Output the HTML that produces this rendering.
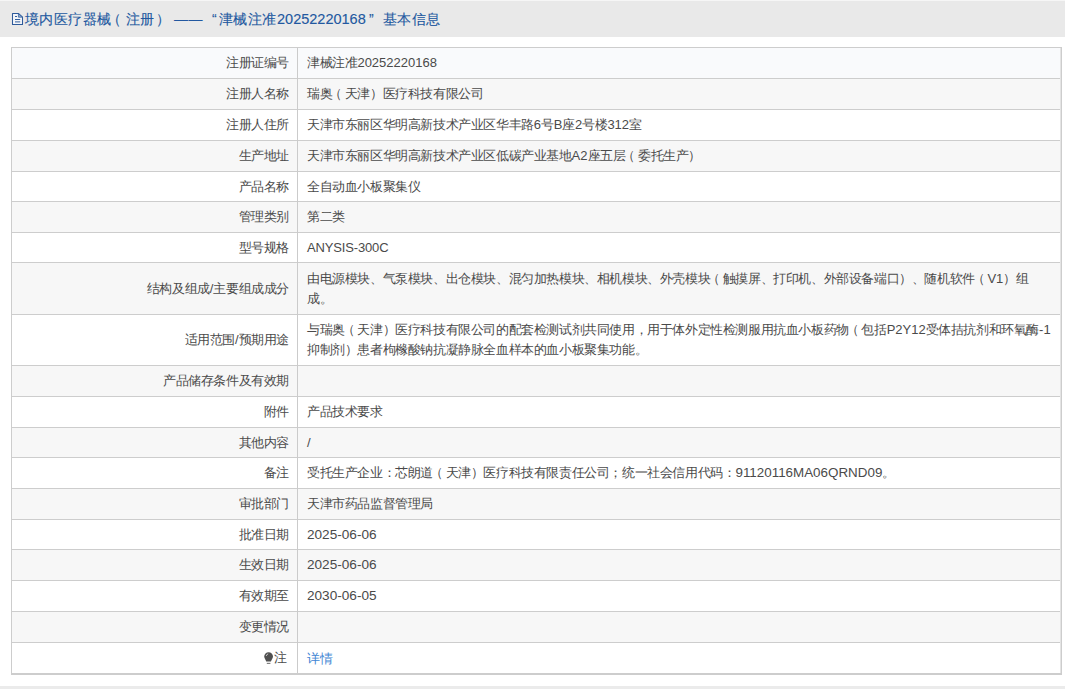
<!DOCTYPE html><html><head><meta charset="utf-8"><style>

html,body{margin:0;padding:0;background:#fff;width:1065px;height:689px;overflow:hidden;position:relative;font-family:"Liberation Sans",sans-serif;}
#hdr{position:absolute;left:0;top:0;width:1065px;height:37px;background:#e9e9e9;border-top:1px solid #f6f6f6;box-sizing:border-box;}
#icon{position:absolute;left:11px;top:12px;}
.t{position:absolute;top:9px;font-size:14px;line-height:20px;color:#2258a0;letter-spacing:0.4px;-webkit-text-stroke:0.12px #2258a0;white-space:nowrap;}
.t.n{font-size:14.5px;letter-spacing:0;}
#foot{position:absolute;left:0;top:686px;width:1065px;height:3px;background:#ebebeb;}
#tbl{position:absolute;left:11px;top:47px;width:1051px;height:628px;box-sizing:border-box;border-style:solid;border-color:#cdcdcd;border-width:1px 1px 2px 1px;box-shadow:inset -1px 0 0 #e4e4e4;}
.r{position:absolute;left:12px;width:1048px;box-sizing:border-box;}
.d{position:absolute;left:12px;width:1048px;height:1px;background:#cdcdcd;}
.g{background:#f7f7f7;}
.h{background:#f9fafc;}
.l{position:absolute;right:771px;top:0;bottom:0;display:flex;align-items:center;justify-content:flex-end;font-size:13px;line-height:20px;color:#4a4a4a;letter-spacing:-0.4px;white-space:nowrap;}
.v{position:absolute;left:295px;top:0;bottom:0;display:flex;align-items:center;font-size:13px;line-height:20px;color:#4a4a4a;letter-spacing:-0.4px;white-space:nowrap;}
.n{letter-spacing:0;}
.lp{position:relative;left:-3px;}
#col{position:absolute;left:297px;top:48px;width:1px;height:625px;background:#cbcbcb;}
.lk{color:#3f86d4;position:relative;top:1px;}
#bulb{position:absolute;left:263px;top:651px;}

</style></head><body>
<div id="hdr"></div>
<svg id="icon" width="13" height="14" viewBox="0 0 13 14"><path d="M1.5 1.5H7.4L11.5 5.2V12.5H1.5Z" fill="#f3f5f9" stroke="#2f5b9b" stroke-width="1.05" stroke-linejoin="round"/><path d="M7.4 1.5L11.5 5.2H7.4Z" fill="#8aa6d0" stroke="#2f5b9b" stroke-width="0.7" stroke-linejoin="round"/><path d="M4 4.5H6M4 7.5H9.2M4 9.9H9.2" stroke="#33609e" stroke-width="1"/></svg>
<span class="t" style="left:25px">境内医疗器械</span>
<span class="t" style="left:107px">（</span>
<span class="t" style="left:126px">注册</span>
<span class="t" style="left:156px">）</span>
<span class="t" style="left:174px">——</span>
<span class="t" style="left:212px">“</span>
<span class="t" style="left:219px">津械注准</span>
<span class="t n" style="left:277px">20252220168</span>
<span class="t" style="left:369px">”</span>
<span class="t" style="left:383px">基本信息</span>
<div id="tbl"></div>
<div class="r h" style="top:48px;height:30px"><div class="l"><div>注册证编号</div></div><div class="v"><div>津械注准<span class="n">20252220168</span></div></div></div>
<div class="r g" style="top:79px;height:30px"><div class="l"><div>注册人名称</div></div><div class="v"><div>瑞奥<span class="lp">（</span>天津）医疗科技有限公司</div></div></div>
<div class="d" style="top:78px"></div>
<div class="r" style="top:110px;height:30px"><div class="l"><div>注册人住所</div></div><div class="v"><div>天津市东丽区华明高新技术产业区华丰路<span class="n">6</span>号<span class="n">B</span>座<span class="n">2</span>号楼<span class="n">312</span>室</div></div></div>
<div class="d" style="top:109px"></div>
<div class="r g" style="top:141px;height:30px"><div class="l"><div>生产地址</div></div><div class="v"><div>天津市东丽区华明高新技术产业区低碳产业基地<span class="n">A2</span>座五层<span class="lp">（</span>委托生产）</div></div></div>
<div class="d" style="top:140px"></div>
<div class="r" style="top:172px;height:29px"><div class="l"><div>产品名称</div></div><div class="v"><div>全自动血小板聚集仪</div></div></div>
<div class="d" style="top:171px"></div>
<div class="r g" style="top:202px;height:30px"><div class="l"><div>管理类别</div></div><div class="v"><div>第二类</div></div></div>
<div class="d" style="top:201px"></div>
<div class="r" style="top:233px;height:29px"><div class="l"><div>型号规格</div></div><div class="v"><div><span class="n" style="letter-spacing:-0.15px">ANYSIS-300C</span></div></div></div>
<div class="d" style="top:232px"></div>
<div class="r g" style="top:263px;height:51px"><div class="l"><div>结构及组成<span class="n">/</span>主要组成成分</div></div><div class="v"><div>由电源模块、气泵模块、出仓模块、混匀加热模块、相机模块、外壳模块<span class="lp">（</span>触摸屏、打印机、外部设备端口）、随机软件<span class="lp">（</span><span class="n">V1</span>）组<br>成。</div></div></div>
<div class="d" style="top:262px"></div>
<div class="r" style="top:315px;height:50px"><div class="l"><div>适用范围<span class="n">/</span>预期用途</div></div><div class="v"><div>与瑞奥<span class="lp">（</span>天津）医疗科技有限公司的配套检测试剂共同使用，用于体外定性检测服用抗血小板药物<span class="lp">（</span>包括<span class="n">P2Y12</span>受体拮抗剂和环氧酶<span class="n">-1</span><br>抑制剂）患者枸橼酸钠抗凝静脉全血样本的血小板聚集功能。</div></div></div>
<div class="d" style="top:314px"></div>
<div class="r g" style="top:366px;height:30px"><div class="l"><div>产品储存条件及有效期</div></div><div class="v"><div></div></div></div>
<div class="d" style="top:365px"></div>
<div class="r" style="top:397px;height:30px"><div class="l"><div>附件</div></div><div class="v"><div>产品技术要求</div></div></div>
<div class="d" style="top:396px"></div>
<div class="r g" style="top:428px;height:29px"><div class="l"><div>其他内容</div></div><div class="v"><div><span class="n">/</span></div></div></div>
<div class="d" style="top:427px"></div>
<div class="r" style="top:458px;height:30px"><div class="l"><div>备注</div></div><div class="v"><div>受托生产企业：芯朗道<span class="lp">（</span>天津）医疗科技有限责任公司；统一社会信用代码：<span class="n" style="font-size:13.4px">91120116MA06QRND09</span>。</div></div></div>
<div class="d" style="top:457px"></div>
<div class="r g" style="top:489px;height:30px"><div class="l"><div>审批部门</div></div><div class="v"><div>天津市药品监督管理局</div></div></div>
<div class="d" style="top:488px"></div>
<div class="r" style="top:520px;height:29px"><div class="l"><div>批准日期</div></div><div class="v"><div><span class="n" style="font-size:13.6px">2025-06-06</span></div></div></div>
<div class="d" style="top:519px"></div>
<div class="r g" style="top:550px;height:30px"><div class="l"><div>生效日期</div></div><div class="v"><div><span class="n" style="font-size:13.6px">2025-06-06</span></div></div></div>
<div class="d" style="top:549px"></div>
<div class="r" style="top:581px;height:30px"><div class="l"><div>有效期至</div></div><div class="v"><div><span class="n" style="font-size:13.6px">2030-06-05</span></div></div></div>
<div class="d" style="top:580px"></div>
<div class="r g" style="top:612px;height:30px"><div class="l"><div>变更情况</div></div><div class="v"><div></div></div></div>
<div class="d" style="top:611px"></div>
<div class="r" style="top:643px;height:30px"><div class="l"><div><span style="position:relative;left:-2px">注</span></div></div><div class="v"><div><span class="lk">详情</span></div></div></div>
<div class="d" style="top:642px"></div>
<div id="col"></div>
<svg id="bulb" width="12" height="14" viewBox="0 0 12 14"><path d="M1.2 5.6A4.4 4.4 0 1 1 10 5.6C10 7.6 8.4 8.6 8 10.6H3.2C2.8 8.6 1.2 7.6 1.2 5.6Z" fill="#505050"/><path d="M3.2 5A2.6 2.6 0 0 1 5.2 2.9" stroke="#c4c4c4" stroke-width="1" fill="none"/><rect x="3.8" y="11.8" width="3.6" height="1.2" fill="#808080"/></svg>
<div id="foot"></div>
</body></html>
